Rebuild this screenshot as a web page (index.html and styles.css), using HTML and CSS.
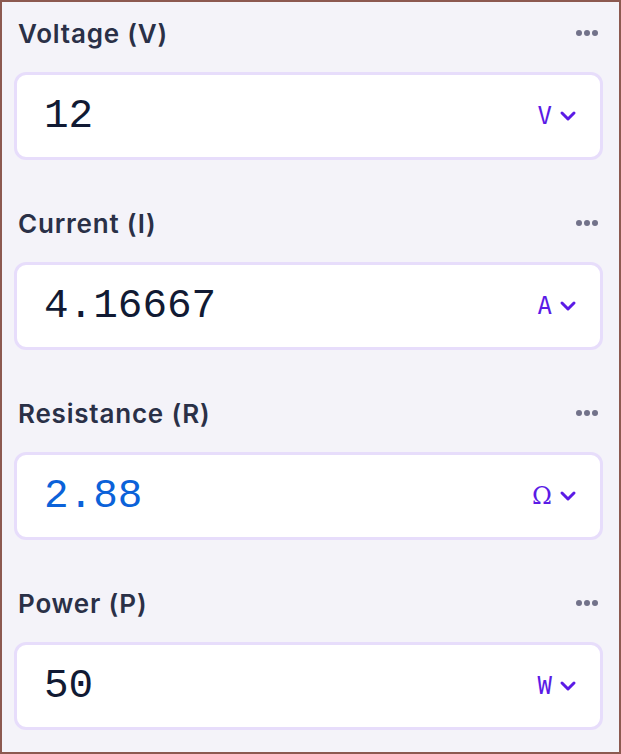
FILE: index.html
```html
<!DOCTYPE html>
<html lang="en">
<head>
    <meta charset="UTF-8">
    <meta name="viewport" content="width=device-width, initial-scale=1.0">
    <title>Ohm's Law Calculator</title>
    <link rel="stylesheet" href="styles.css">
</head>
<body>
    <div class="calc">
        <div class="field">
            <div class="field-head">
                <span class="label">Voltage (V)</span>
                <span class="more"><i></i><i></i><i></i></span>
            </div>
            <div class="input-box">
                <span class="value">12</span>
                <span class="unit">V <svg viewBox="0 0 20 20"><path d="M4 7l6 6 6-6"/></svg></span>
            </div>
        </div>
        <div class="field">
            <div class="field-head">
                <span class="label">Current (I)</span>
                <span class="more"><i></i><i></i><i></i></span>
            </div>
            <div class="input-box">
                <span class="value">4.16667</span>
                <span class="unit">A <svg viewBox="0 0 20 20"><path d="M4 7l6 6 6-6"/></svg></span>
            </div>
        </div>
        <div class="field">
            <div class="field-head">
                <span class="label">Resistance (R)</span>
                <span class="more"><i></i><i></i><i></i></span>
            </div>
            <div class="input-box">
                <span class="value computed">2.88</span>
                <span class="unit"><span class="omega">Ω</span> <svg viewBox="0 0 20 20"><path d="M4 7l6 6 6-6"/></svg></span>
            </div>
        </div>
        <div class="field">
            <div class="field-head">
                <span class="label">Power (P)</span>
                <span class="more"><i></i><i></i><i></i></span>
            </div>
            <div class="input-box">
                <span class="value">50</span>
                <span class="unit">W <svg viewBox="0 0 20 20"><path d="M4 7l6 6 6-6"/></svg></span>
            </div>
        </div>
    </div>
</body>
</html>
```

FILE: styles.css
```css
html, body {
    margin: 0;
    height: 100%;
}
body {
    font-family: Inter, sans-serif;
    background-color: #f4f3f9;
}
.calc {
    box-sizing: border-box;
    height: 754px;
    border: 2px solid #8c5950;
    padding: 9px 16px 0 12px;
}
.field {
    margin-bottom: 41px;
}
.field-head {
    height: 44px;
    display: flex;
    align-items: center;
    justify-content: space-between;
    margin-bottom: 17px;
    padding-left: 4px;
}
.label {
    font-size: 26px;
    font-weight: 600;
    letter-spacing: 0.8px;
    color: #2a3047;
}
.more {
    display: flex;
    gap: 2px;
    margin-right: 5px;
}
.more i {
    width: 6px;
    height: 6px;
    border-radius: 50%;
    background-color: #72728a;
}
.input-box {
    box-sizing: border-box;
    height: 88px;
    display: flex;
    align-items: center;
    justify-content: space-between;
    background-color: white;
    border: 3px solid #e7ddfb;
    border-radius: 12px;
    padding: 0 22px 0 27px;
}
.value {
    font-family: "Liberation Mono", monospace;
    font-size: 41px;
    color: #111a33;
}
.value.computed {
    color: #0b62d9;
}
.unit {
    display: flex;
    align-items: center;
    gap: 6px;
    font-family: "DejaVu Sans Mono", monospace;
    font-size: 24px;
    color: #5b1be6;
}
.omega {
    font-family: "DejaVu Serif", serif;
}
.unit svg {
    width: 20px;
    height: 20px;
    fill: none;
    stroke: #5b1be6;
    stroke-width: 3;
    stroke-linecap: round;
    stroke-linejoin: round;
}
```
